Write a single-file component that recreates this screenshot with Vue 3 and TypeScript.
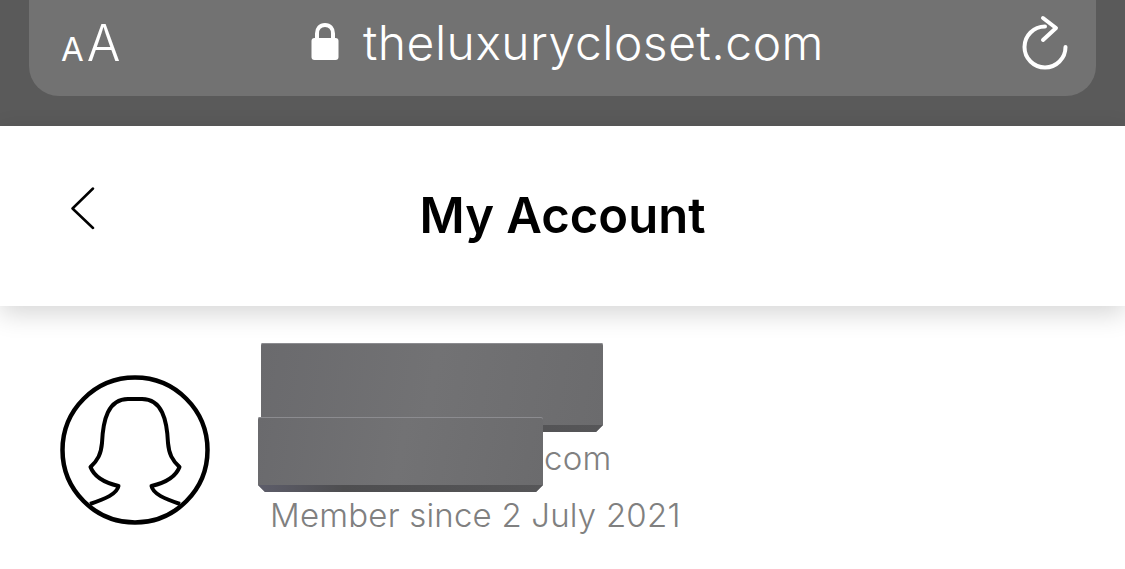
<template>
  <div class="page">
    <!-- safari url bar -->
    <div class="browser-bar">
      <div class="url-pill">
        <div class="text-size">
          <span class="small-a">A</span>
          <span class="big-a">A</span>
        </div>
        <div class="address">
          <svg class="lock" width="28" height="38" viewBox="0 0 28 38">
            <path d="M6 18V11.500C6 6.500 9 3 14 3C19 3 22 6.500 22 11.500V18" fill="none" stroke="#fff" stroke-width="4" />
            <rect x="0.500" y="16" width="27" height="22" rx="3" fill="#fff" />
          </svg>
          <span class="domain">{{ domain }}</span>
        </div>
        <svg class="reload" width="48" height="56" viewBox="0 0 48 56">
          <path d="M24 11.500A20.500 20.500 0 1 0 44.500 32" fill="none" stroke="#fff" stroke-width="4" stroke-linecap="round" />
          <path d="M22 3L35 13L22 25" fill="none" stroke="#fff" stroke-width="4" stroke-linecap="round" stroke-linejoin="round" />
        </svg>
      </div>
    </div>

    <header class="top-nav">
      <svg class="back" width="26" height="44" viewBox="0 0 26 44">
        <path d="M23 1.500L2.500 21.500L23 41" fill="none" stroke="#000" stroke-width="2.500" stroke-linecap="round" stroke-linejoin="round" />
      </svg>
      <h1 class="title">My Account</h1>
    </header>

    <section class="profile">
      <svg class="avatar" width="150" height="150" viewBox="0 0 150 150">
        <circle cx="75" cy="75" r="72.500" fill="none" stroke="#000" stroke-width="4.500" />
        <path
          d="M30 129C45 124 57 119 58.500 111C50 109 35 104 30.500 92C38 85 41 79 42 68C43 45 48 24 68 24L82 24C102 24 107 45 108 68C109 79 112 85 119.500 92C115 104 100 109 91.500 111C93 119 105 124 120 129"
          fill="none"
          stroke="#000"
          stroke-width="4"
          stroke-linejoin="round"
        />
      </svg>
      <div class="info">
        <div class="name-row"></div>
        <div class="email-row">com</div>
        <div class="member-row">Member since {{ memberSince }}</div>
        <!-- scribbled out in the screenshot -->
        <div class="redact redact-name"></div>
        <div class="redact redact-email"></div>
      </div>
    </section>
  </div>
</template>

<script setup lang="ts">
const domain = 'theluxurycloset.com'
const memberSince = '2 July 2021'
</script>

<style>
html,
body {
  margin: 0;
  background: #fff;
  overflow: hidden;
}
</style>

<style scoped>
.page {
  width: 1125px;
  height: 569px;
  overflow: hidden;
  background: #fff;
  font-family: Inter, sans-serif;
}

.browser-bar {
  height: 126px;
  padding: 0 29px;
  box-sizing: border-box;
  background: #5a5a5a;
}

.url-pill {
  height: 96px;
  padding: 0 27px 0 32px;
  box-sizing: border-box;
  display: flex;
  align-items: center;
  justify-content: space-between;
  background: #727272;
  border-radius: 0 0 30px 30px;
  color: #fff;
}

.text-size {
  display: flex;
  align-items: baseline;
  gap: 3px;
  width: 60px;
  margin-top: -10px;
}

.small-a {
  font-size: 33px;
}

.big-a {
  font-size: 50px;
  font-weight: 300;
}

.address {
  display: flex;
  align-items: center;
  gap: 24px;
  margin: -10px 0 0 -7px;
}

.lock {
  margin-top: -4px;
}

.domain {
  font-size: 48px;
  line-height: 60px;
  font-weight: 350;
  letter-spacing: 0.5px;
}

.reload {
  margin-top: -11px;
}

.top-nav {
  position: relative;
  z-index: 1;
  height: 180px;
  display: flex;
  align-items: center;
  justify-content: center;
  background: #fff;
  box-shadow: 0 8px 24px rgba(0, 0, 0, 0.16);
}

.back {
  position: absolute;
  left: 70px;
  top: 61px;
}

.title {
  margin: 0;
  font-size: 49px;
  line-height: 60px;
  font-weight: 600;
  color: #000;
}

.profile {
  display: flex;
  align-items: flex-start;
  padding: 69px 0 0 60px;
}

.info {
  position: relative;
  margin: -32px 0 0 60px;
  width: 500px;
  color: #808080;
  font-size: 33px;
  font-weight: 350;
  line-height: 57px;
  letter-spacing: 0.2px;
}

.name-row {
  height: 87px;
}

.email-row {
  padding-left: 274px;
}

.redact {
  position: absolute;
  box-sizing: border-box;
  background: linear-gradient(100deg, #6a6a6d, #727274 50%, #6b6b6d);
  border-radius: 2px 2px 0 0;
  box-shadow: inset 0 1px 0 #8c8c90;
  clip-path: polygon(0 0, 100% 0, 100% calc(100% - 7px), calc(100% - 7px) 100%, 7px 100%, 0 calc(100% - 7px));
}

.redact::after {
  content: "";
  position: absolute;
  left: 0;
  right: 0;
  bottom: 0;
  height: 7px;
  background: linear-gradient(90deg, #5d5d6a, #4e4e50 30%, #565658);
}

.redact-name {
  left: -9px;
  top: 0;
  width: 342px;
  height: 89px;
}

.redact-email {
  left: -12px;
  top: 74px;
  width: 285px;
  height: 75px;
}
</style>
